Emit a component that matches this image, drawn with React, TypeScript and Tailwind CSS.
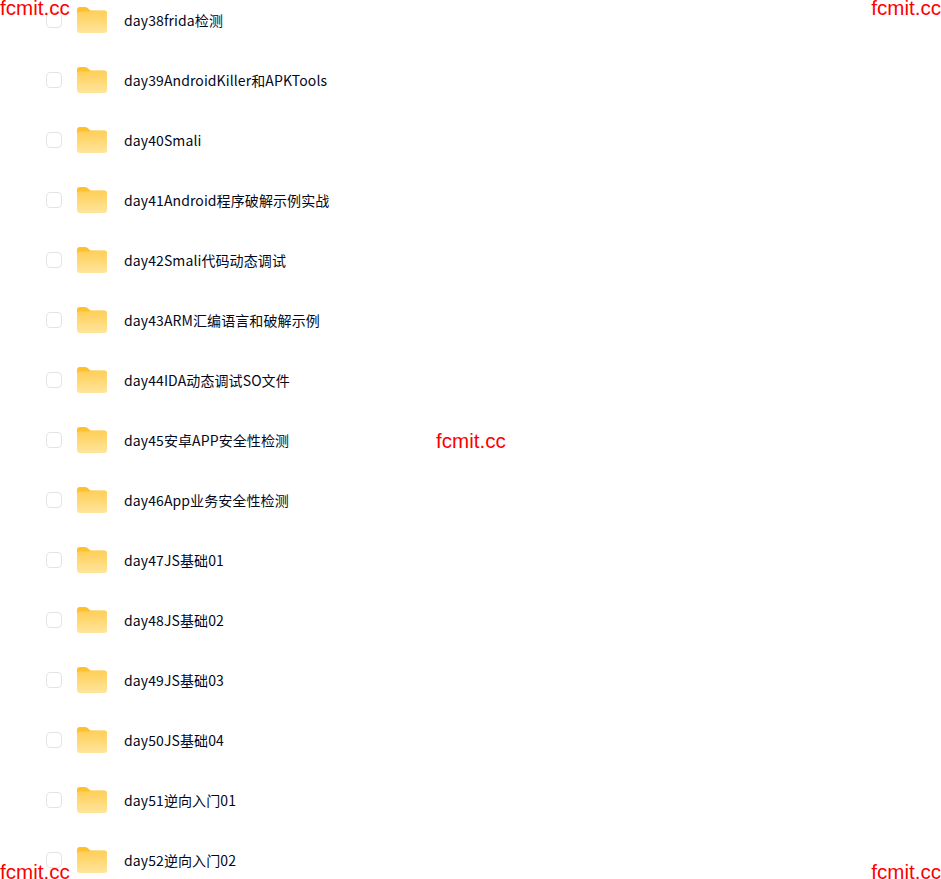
const names = [
  "day38frida检测",
  "day39AndroidKiller和APKTools",
  "day40Smali",
  "day41Android程序破解示例实战",
  "day42Smali代码动态调试",
  "day43ARM汇编语言和破解示例",
  "day44IDA动态调试SO文件",
  "day45安卓APP安全性检测",
  "day46App业务安全性检测",
  "day47JS基础01",
  "day48JS基础02",
  "day49JS基础03",
  "day50JS基础04",
  "day51逆向入门01",
  "day52逆向入门02",
];

function Folder({ id }: { id: number }) {
  return (
    <svg width="30" height="26" viewBox="0 0 30 26" className="shrink-0">
      <defs>
        <linearGradient id={`f${id}`} x1="0" y1="0" x2="0" y2="1">
          <stop offset="0" stopColor="#ffcf57" />
          <stop offset="1" stopColor="#ffe59c" />
        </linearGradient>
      </defs>
      <path d="M0 3a3 3 0 0 1 3-3h5.2a3 3 0 0 1 2 .8L13.5 3.500H27a3 3 0 0 1 3 3V12H0z" fill="#ffc02e" />
      <path d="M0 7.500a3 3 0 0 1 3-3h9.500L14 4H27a3 3 0 0 1 3 3v16a3 3 0 0 1-3 3H3a3 3 0 0 1-3-3z" fill={`url(#f${id})`} />
    </svg>
  );
}

function Mark({ className }: { className: string }) {
  return (
    <span className={`absolute text-[20.6px] leading-[20px] text-[#ff0000] font-['Liberation_Sans',sans-serif] ${className}`}>
      fcmit.cc
    </span>
  );
}

export default function App() {
  return (
    <div className="relative h-[879px] w-[941px] overflow-hidden bg-white font-['Noto_Sans_CJK_SC','Noto_Sans',sans-serif]">
      <ul className="-mt-[10px] flex flex-col">
        {names.map((n, i) => (
          <li key={n} className="flex h-[60px] items-center pl-[46px]">
            <span className="h-4 w-4 shrink-0 rounded-[4px] border border-[#e3e4e9] bg-white" />
            <span className="ml-[15px]"><Folder id={i} /></span>
            <span className="ml-[17px] text-[14px] leading-5 tracking-[0.1px] text-[#03081a]">{n}</span>
          </li>
        ))}
      </ul>
      <Mark className="left-0 -top-[2px]" />
      <Mark className="right-0 -top-[2px]" />
      <Mark className="left-[436px] top-[431px]" />
      <Mark className="left-0 top-[862px]" />
      <Mark className="right-0 top-[862px]" />
    </div>
  );
}
